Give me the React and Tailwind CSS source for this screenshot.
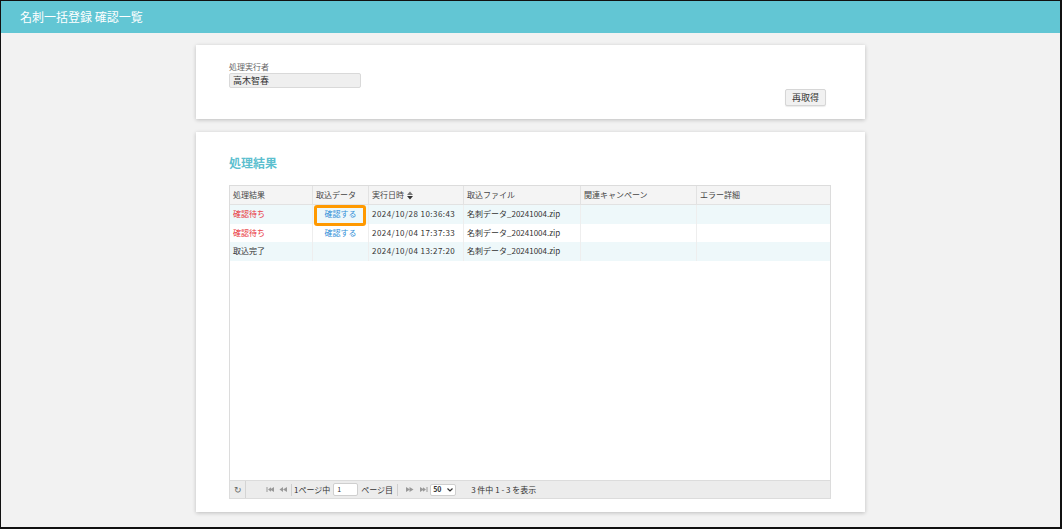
import React from "react";

const jp = { fontFamily: '"Noto Sans CJK JP", "Noto Sans", sans-serif' };

const cols = [
  { w: "w-[83px]", label: "処理結果" },
  { w: "w-[56px]", label: "取込データ" },
  { w: "w-[95px]", label: "実行日時", sort: true },
  { w: "w-[117px]", label: "取込ファイル" },
  { w: "w-[116px]", label: "関連キャンペーン" },
  { w: "flex-1", label: "エラー詳細" },
];

const rows = [
  { status: "確認待ち", red: true, link: true, hl: true, date: "2024/10/28 10:36:43", file: "名刺データ_20241004.zip", bg: "bg-[#eef8fa]" },
  { status: "確認待ち", red: true, link: true, date: "2024/10/04 17:37:33", file: "名刺データ_20241004.zip", bg: "bg-white" },
  { status: "取込完了", red: false, link: false, date: "2024/10/04 13:27:20", file: "名刺データ_20241004.zip", bg: "bg-[#eef8fa]" },
];

function SortIcon() {
  return (
    <svg width="6" height="9" viewBox="0 0 6 9" className="ml-[3px] inline-block">
      <path d="M0 4 L3 0.5 L6 4 Z" fill="#777" />
      <path d="M0 5 L3 8.5 L6 5 Z" fill="#333" />
    </svg>
  );
}

function NavIcon({ dir, bar }) {
  return (
    <svg width="9" height="7" viewBox="0 0 9 7" className="inline-block">
      {dir === "l" ? (
        <>
          {bar ? <rect x="0.5" y="1" width="1" height="5" fill="#999" /> : <path d="M0.5 3.5 L4 1 L4 6 Z" fill="#999" />}
          <path d="M4 3.5 L8 1 L8 6 Z" fill="#999" />
          {bar && <path d="M2 3.5 L5 1.2 L5 5.8 Z" fill="#999" />}
        </>
      ) : (
        <>
          <path d="M1 1 L5 3.5 L1 6 Z" fill="#999" />
          {bar ? <rect x="7.5" y="1" width="1" height="5" fill="#999" /> : <path d="M4.5 1 L8.5 3.5 L4.5 6 Z" fill="#999" />}
          {bar && <path d="M4 1.2 L7 3.5 L4 5.8 Z" fill="#999" />}
        </>
      )}
    </svg>
  );
}

export default function App() {
  return (
    <div className="w-[1062px] h-[529px] overflow-hidden bg-[#f2f2f2] border-l border-t border-r-2 border-b-2 border-[#111] flex flex-col" style={jp}>
      <div className="h-[32px] shrink-0 bg-[#62c6d4] flex items-center pl-[19px] text-white text-[12px]">
        名刺一括登録 確認一覧
      </div>
      <div className="flex flex-col items-center pt-[12px] gap-[13px]">
        <div className="w-[669px] h-[74px] bg-white shadow-[0_1px_4px_rgba(0,0,0,0.22)] relative pl-[33px] pt-[17px]">
          <div className="text-[8px] leading-[10px] text-[#666]">処理実行者</div>
          <div className="mt-[1px] w-[132px] h-[15px] bg-[#efefef] border border-[#d9d9d9] rounded-[2px] text-[9px] leading-[13px] pl-[3px] text-[#333]">
            高木智春
          </div>
          <div className="absolute left-[589px] top-[44px] w-[41px] h-[17px] bg-[#f1f1f1] border border-[#d6d6d6] rounded-[2px] shadow-[0_1px_1px_rgba(0,0,0,0.08)] text-[9px] leading-[15px] text-center text-[#333]">
            再取得
          </div>
        </div>
        <div className="w-[669px] h-[380px] bg-white shadow-[0_1px_4px_rgba(0,0,0,0.22)] pl-[33px] pr-[34px] pt-[23px] flex flex-col">
          <div className="text-[12px] leading-[16px] font-bold text-[#5cbfcf]">処理結果</div>
          <div className="mt-[14px] w-[602px] h-[314px] border border-[#dcdcdc] flex flex-col">
            <div className="flex h-[19px] bg-[#f4f4f4] border-b border-[#e2e2e2] text-[8px] text-[#444]">
              {cols.map((c, i) => (
                <div key={i} className={`${c.w} shrink-0 flex items-center pl-[3px] ${i < 5 ? "border-r border-[#e2e2e2]" : ""}`}>
                  {c.label}
                  {c.sort && <SortIcon />}
                </div>
              ))}
            </div>
            {rows.map((r, ri) => (
              <div key={ri} className={`flex h-[18.5px] ${r.bg} text-[8px] text-[#333]`}>
                <div className={`w-[83px] shrink-0 flex items-center pl-[3px] border-r border-[#eeeeee] ${r.red ? "text-[#e8333a]" : ""}`}>{r.status}</div>
                <div className="w-[56px] shrink-0 flex items-center justify-center border-r border-[#eeeeee] relative">
                  {r.link && <span className="text-[#2f8fd8]">確認する</span>}
                  {r.hl && (
                    <div className="absolute left-[1px] top-[0px] w-[52px] h-[21px] border-[3px] border-[#ff9900] rounded-[3px]" />
                  )}
                </div>
                <div className="w-[95px] shrink-0 flex items-center pl-[3px] border-r border-[#eeeeee] tracking-[0.45px]">{r.date}</div>
                <div className="w-[117px] shrink-0 flex items-center pl-[3px] border-r border-[#eeeeee]">{r.file}</div>
                <div className="w-[116px] shrink-0 border-r border-[#eeeeee]" />
                <div className="flex-1" />
              </div>
            ))}
            <div className="flex-1" />
            <div className="h-[18px] bg-[#ececec] border-t border-[#dcdcdc] flex items-center text-[8px] text-[#333]">
              <div className="w-[16px] h-[17px] border-r border-[#d4d4d4] flex items-center justify-center text-[9px] text-[#666]">↻</div>
              <div className="ml-[20px] flex items-center gap-[4px]">
                <NavIcon dir="l" bar />
                <NavIcon dir="l" />
              </div>
              <div className="ml-[3px] w-px h-[12px] bg-[#cfcfcf]" />
              <span className="ml-[2px]">1ページ中</span>
              <div className="ml-[3px] w-[25px] h-[13px] bg-white border border-[#cfcfcf] rounded-[2px] text-[7px] leading-[11px] pl-[3px]">1</div>
              <span className="ml-[3px]">ページ目</span>
              <div className="ml-[4px] w-px h-[12px] bg-[#cfcfcf]" />
              <div className="ml-[7px] flex items-center gap-[5px]">
                <NavIcon dir="r" />
                <NavIcon dir="r" bar />
              </div>
              <div className="ml-[2px] w-[26px] h-[12px] bg-white border border-[#cfcfcf] rounded-[2px] flex items-center justify-between px-[2px] text-[7px] font-bold">
                <span>50</span>
                <svg width="6" height="4" viewBox="0 0 6 4"><path d="M0.5 0.5 L3 3 L5.5 0.5" stroke="#333" strokeWidth="1.2" fill="none" /></svg>
              </div>
              <span className="ml-[15px]">3 件中 1 - 3 を表示</span>
            </div>
          </div>
        </div>
      </div>
    </div>
  );
}
